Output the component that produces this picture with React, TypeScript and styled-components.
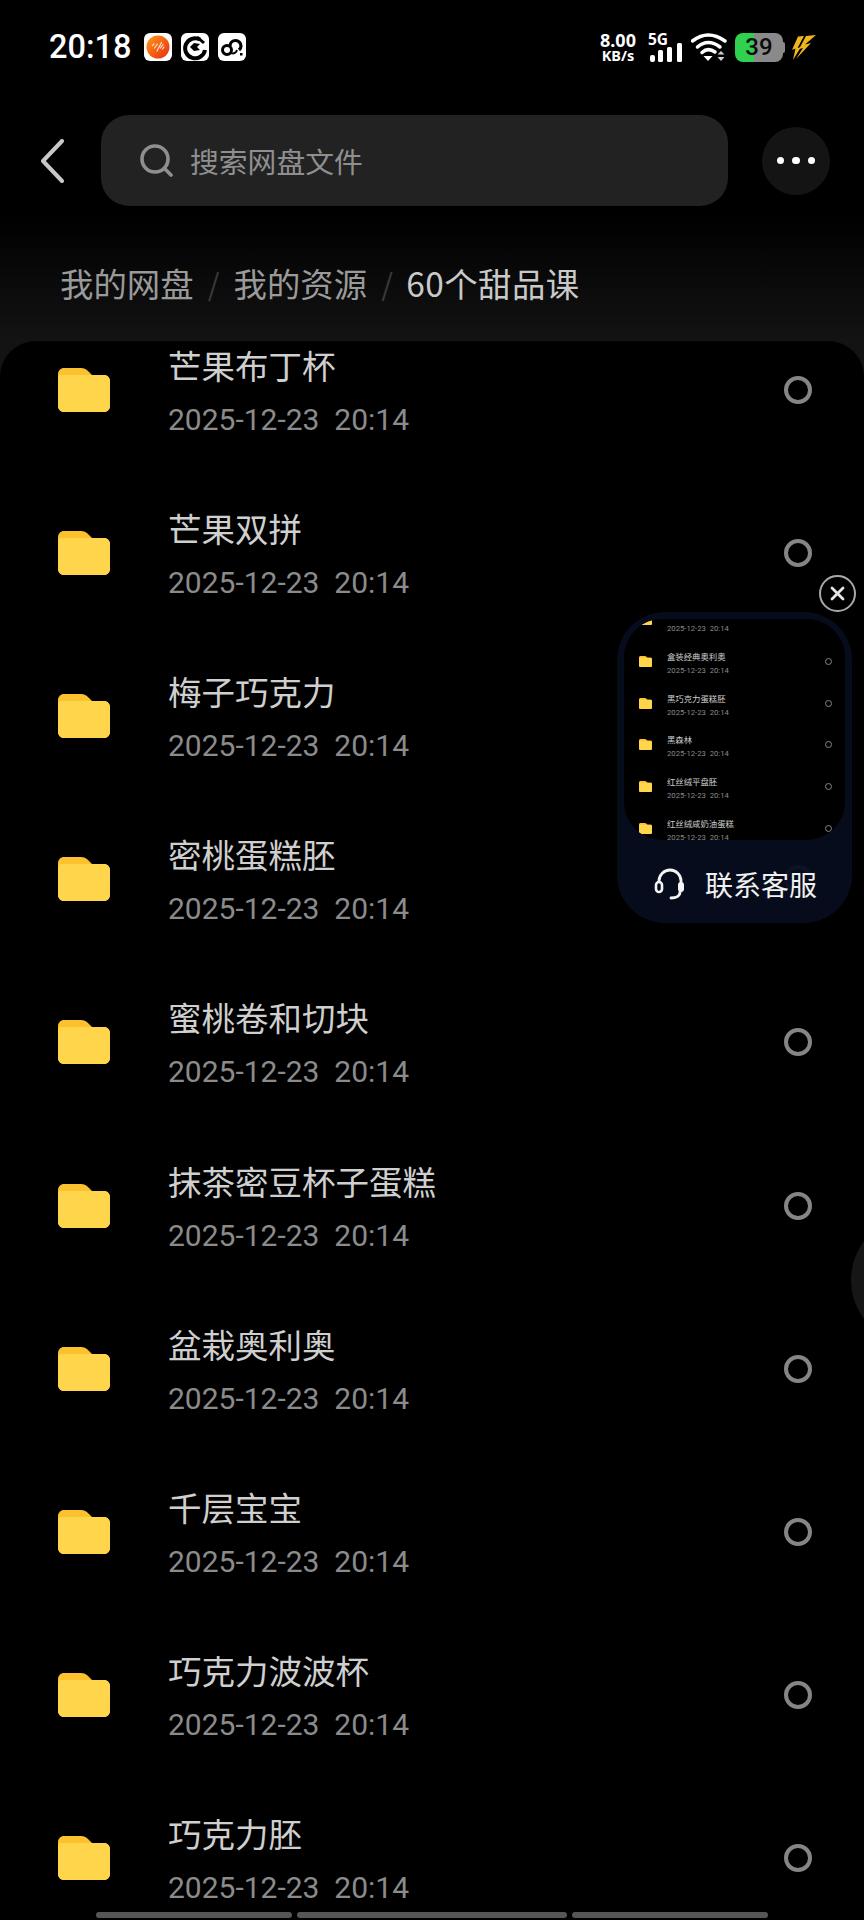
import React from "react";
import styled, { createGlobalStyle } from "styled-components";

const Global = createGlobalStyle`
  html, body { margin: 0; padding: 0; background: #000; }
  * { box-sizing: border-box; }
  body { font-family: Roboto, "Noto Sans CJK SC", sans-serif; }
`;

const Screen = styled.div`
  position: relative;
  width: 864px;
  height: 1920px;
  background: #000;
  overflow: hidden;
  display: flex;
  flex-direction: column;
`;
const Header = styled.header`
  flex: none;
  height: 341px;
  background: linear-gradient(#000 0, #000 215px, #131313 341px);
`;
const StatusBar = styled.div`
  height: 94px;
  padding: 0 48px 0 49px;
  display: flex;
  align-items: center;
`;
const Clock = styled.span`
  font: 500 32.5px/1 Roboto, sans-serif;
  color: #fff;
  margin-right: 12px;
  width: 83px;
  white-space: nowrap;
`;
const AppIcons = styled.div`
  display: flex;
  gap: 9px;
  flex: 1;
`;
const StatusGroup = styled.div`
  display: flex;
  align-items: center;
`;
const Speed = styled.div`
  display: flex;
  flex-direction: column;
  align-items: center;
  color: #fff;
  font-family: "Noto Sans", sans-serif;
  font-weight: 700;
  width: 38px;
  margin-right: 11px;
`;
const SpeedValue = styled.span`
  font-size: 18px;
  line-height: 16px;
`;
const SpeedUnit = styled.span`
  font-size: 14.5px;
  line-height: 14px;
`;
const Signal = styled.div`
  position: relative;
  width: 35px;
  height: 29px;
  margin-right: 8px;
`;
const NetLabel = styled.span`
  position: absolute;
  left: 0;
  top: 0;
  font: 700 15.5px/13px "Noto Sans", sans-serif;
  color: #fff;
`;
const Battery = styled.div<{ $level: number }>`
  width: 48px;
  height: 29px;
  margin-left: 8px;
  border-radius: 8px;
  background: linear-gradient(90deg, #2fd14f ${(p) => p.$level}%, #8a8a8a ${(p) => p.$level}%);
  color: #0c0c0c;
  font: 500 24px/29px Roboto, sans-serif;
  text-align: center;
`;
const BatteryNub = styled.div`
  width: 2px;
  height: 11px;
  margin-right: 7px;
  background: #8a8a8a;
  border-radius: 0 2px 2px 0;
`;
const TopBar = styled.div`
  margin-top: 21px;
  height: 91px;
  padding-left: 40px;
  display: flex;
  align-items: center;
`;
const BackButton = styled.div`
  width: 24px;
  height: 44px;
  margin-right: 37px;
  display: flex;
`;
const SearchBox = styled.div`
  width: 627px;
  height: 91px;
  margin-right: 34px;
  padding-left: 39px;
  border-radius: 28px;
  background: #222;
  display: flex;
  align-items: center;
  gap: 17px;
  color: #8f8f8f;
  font: 400 28.8px/40px "Noto Sans CJK SC", sans-serif;
`;
const MoreButton = styled.div`
  width: 68px;
  height: 68px;
  border-radius: 50%;
  background: #141414;
  display: flex;
  align-items: center;
  justify-content: center;
  gap: 8px;
`;
const Dot = styled.span`
  width: 7.5px;
  height: 7.5px;
  border-radius: 50%;
  background: #fff;
`;
const Crumbs = styled.nav`
  padding: 57px 0 38px 60px;
  display: flex;
  font: 400 33.4px/40px "Noto Sans CJK SC", sans-serif;
  color: #9a9a9a;
`;
const CrumbSep = styled.span`
  color: #3a3a3a;
  font-size: 30px;
  width: 40px;
  text-align: center;
`;
const CrumbCurrent = styled.span`
  color: #c9c9c9;
  letter-spacing: 0.5px;
  margin-left: -1px;
`;

const Panel = styled.main`
  flex: 1;
  overflow: hidden;
  background: #000;
  border-radius: 36px 36px 0 0;
  margin-top: 0;
`;
const HeaderBackdrop = styled.div`
  background: #131313;
  flex: 1;
  display: flex;
  min-height: 0;
`;
const List = styled.div`
  margin-top: -33px;
  width: 864px;
`;
const Row = styled.div`
  height: 163.2px;
  padding: 0 52px 0 58px;
  display: flex;
  align-items: center;
`;
const RowText = styled.div`
  flex: 1;
  margin-left: 58px;
  padding-top: 4px;
`;
const Name = styled.div`
  font: 400 33.5px/40px "Noto Sans CJK SC", sans-serif;
  color: #cfcfcf;
`;
const DateText = styled.div`
  margin-top: 16px;
  font: 400 30px/38px Roboto, sans-serif;
  color: #8b8b8b;
  white-space: pre;
`;
const Ring = styled.span`
  width: 28px;
  height: 28px;
  border-radius: 50%;
  border: 4px solid #858585;
`;

const Widget = styled.aside`
  position: absolute;
  left: 617px;
  top: 612px;
  width: 235px;
  height: 311px;
  border-radius: 48px;
  background: rgba(6, 13, 30, 0.95);
  padding: 7px 7px 0;
`;
const MiniScreen = styled.div`
  height: 221px;
  border-radius: 38px;
  overflow: hidden;
  background: #000;
`;
const MiniList = styled.div`
  margin-top: -20px;
`;
const MiniRow = styled.div`
  height: 41.7px;
  padding: 0 13px 0 15px;
  display: flex;
  align-items: center;
`;
const MiniText = styled.div`
  flex: 1;
  margin-left: 15px;
  padding-top: 4px;
`;
const MiniName = styled.div`
  font: 400 8.4px/11px "Noto Sans CJK SC", sans-serif;
  color: #cfcfcf;
`;
const MiniDate = styled.div`
  font: 400 7.7px/10px Roboto, sans-serif;
  margin-top: 4px;
  color: #8b8b8b;
  white-space: pre;
`;
const MiniRing = styled.span`
  width: 7px;
  height: 7px;
  border-radius: 50%;
  border: 1px solid #858585;
`;
const ServiceButton = styled.div`
  height: 83px;
  padding: 5px 0 0 30px;
  display: flex;
  align-items: center;
  gap: 19px;
  color: #f0f0f0;
  font: 400 28px/36px "Noto Sans CJK SC", sans-serif;
`;
const CloseButton = styled.div`
  position: absolute;
  left: 819px;
  top: 575px;
  width: 37px;
  height: 37px;
  border-radius: 50%;
  border: 2px solid #a8a8a8;
  background: #000;
  display: flex;
  align-items: center;
  justify-content: center;
`;
const EdgeHandle = styled.div`
  position: absolute;
  left: 851px;
  top: 1215px;
  width: 130px;
  height: 130px;
  border-radius: 50%;
  background: #161616;
`;
const ScrollBars = styled.div`
  position: absolute;
  left: 96px;
  bottom: 2px;
  width: 672px;
  height: 6px;
  display: flex;
  gap: 5px;
`;
const ScrollSegment = styled.span<{ $w: number }>`
  width: ${(p) => p.$w}px;
  border-radius: 3px;
  background: #565656;
`;

const Folder = ({ w = 52 }: { w?: number }) => (
  <svg width={w} height={(w * 44) / 52} viewBox="0 0 52 44" style={{ flex: "none" }}>
    <path d="M6 0h17c3 0 5 1 7 3l4 4h12c3.300 0 6 2.700 6 6v25c0 3.300-2.700 6-6 6H6c-3.300 0-6-2.700-6-6V6c0-3.300 2.700-6 6-6z" fill="#fcc12f" />
    <path d="M0 10c0-1.500 1-3 3-3h43c3.300 0 6 2.700 6 6v25c0 3.300-2.700 6-6 6H6c-3.300 0-6-2.700-6-6z" fill="#ffd64b" />
  </svg>
);

const items = ["芒果布丁杯", "芒果双拼", "梅子巧克力", "密桃蛋糕胚", "蜜桃卷和切块", "抹茶密豆杯子蛋糕", "盆栽奥利奥", "千层宝宝", "巧克力波波杯", "巧克力胚"];
const miniItems = ["", "盒装经典奥利奥", "黑巧克力蛋糕胚", "黑森林", "红丝绒平盘胚", "红丝绒咸奶油蛋糕"];
const DATE = "2025-12-23  20:14";

export default function App() {
  return (
    <Screen>
      <Global />
      <Header>
        <StatusBar>
          <Clock>20:18</Clock>
          <AppIcons>
            <svg width="28" height="28" viewBox="0 0 28 28">
              <rect width="28" height="28" rx="6" fill="#fff" />
              <defs>
                <linearGradient id="og" x1="0" y1="0" x2="1" y2="1">
                  <stop offset="0" stopColor="#ff9a1a" />
                  <stop offset="1" stopColor="#ea2a10" />
                </linearGradient>
              </defs>
              <circle cx="14" cy="14" r="11.500" fill="url(#og)" />
              <path d="M8.500 12.500l1.500-1.500M10.500 15l3-4M13 18l4.500-8.500M16.500 15l2.500-3.500M18.500 16l1.500-2" stroke="#ffe3cf" strokeWidth="1.200" strokeLinecap="round" fill="none" />
            </svg>
            <svg width="28" height="28" viewBox="0 0 28 28">
              <rect width="28" height="28" rx="6" fill="#fff" />
              <path d="M19 6.500A10 10 0 1 0 24 17" fill="none" stroke="#000" strokeWidth="4" />
              <path d="M17 3l7 6-2 2-7-6z" fill="#000" />
              <path d="M19 11l-6-1-4 4 4 4 6-1-3-3z" fill="#000" />
            </svg>
            <svg width="28" height="28" viewBox="0 0 28 28">
              <rect width="28" height="28" rx="6" fill="#fff" />
              <circle cx="9" cy="17" r="4.500" fill="none" stroke="#000" strokeWidth="3" />
              <path d="M12 13a5.500 5.500 0 0 1 11 0c0 2-1 3-2 4" fill="none" stroke="#000" strokeWidth="3.200" />
              <path d="M13 20c3 1 5 0 6-3" fill="none" stroke="#000" strokeWidth="2" />
              <rect x="22" y="20" width="2.500" height="2.500" fill="#000" />
            </svg>
          </AppIcons>
          <StatusGroup>
            <Speed>
              <SpeedValue>8.00</SpeedValue>
              <SpeedUnit>KB/s</SpeedUnit>
            </Speed>
            <Signal>
              <NetLabel>5G</NetLabel>
              <svg width="35" height="29" viewBox="0 0 35 29">
                <rect x="2" y="22" width="5" height="7" rx="2" fill="#fff" />
                <rect x="10" y="17" width="5" height="12" rx="1.500" fill="#fff" />
                <rect x="19" y="14" width="5" height="15" rx="1.500" fill="#fff" />
                <rect x="29" y="10" width="5" height="19" rx="1.500" fill="#fff" />
              </svg>
            </Signal>
            <svg width="36" height="30" viewBox="0 0 36 30">
              <path d="M1.500 9Q17 -3 34 9" fill="none" stroke="#fff" strokeWidth="3.500" strokeLinecap="round" />
              <path d="M6.500 15Q17 6 29 15" fill="none" stroke="#fff" strokeWidth="3.500" strokeLinecap="round" />
              <path d="M11 20.500Q17 15 24 20" fill="none" stroke="#fff" strokeWidth="3.500" strokeLinecap="round" />
              <path d="M12.500 24h9L17 29z" fill="#fff" />
              <path d="M26.500 22.500L30 19l3.500 3.500zM26.500 25L30 29l3.500-4z" fill="#d0d0d0" />
            </svg>
            <Battery $level={39}>39</Battery>
            <BatteryNub />
            <svg width="24" height="25" viewBox="0 0 24 25">
              <path d="M6 1.500L12 1 5.500 13 9 12 1 25l2.500-11.500L0 15z" fill="#f0b71d" />
              <path d="M14 1l10-1-11 9.500 6-1.500L4 24l7-11-4 1z" fill="#f0b71d" />
            </svg>
          </StatusGroup>
        </StatusBar>
        <TopBar>
          <BackButton>
            <svg width="24" height="44" viewBox="0 0 24 44">
              <path d="M22 2L3 22l19 20" fill="none" stroke="#c8c8c8" strokeWidth="4" strokeLinecap="round" strokeLinejoin="round" />
            </svg>
          </BackButton>
          <SearchBox>
            <svg width="33" height="33" viewBox="0 0 33 33" style={{ flex: "none" }}>
              <circle cx="15" cy="15" r="13" fill="none" stroke="#8f8f8f" strokeWidth="3.600" />
              <path d="M24.500 24.500L31 31" stroke="#8f8f8f" strokeWidth="3.600" strokeLinecap="round" />
            </svg>
            搜索网盘文件
          </SearchBox>
          <MoreButton>
            <Dot />
            <Dot />
            <Dot />
          </MoreButton>
        </TopBar>
        <Crumbs>
          <span>我的网盘</span>
          <CrumbSep>/</CrumbSep>
          <span>我的资源</span>
          <CrumbSep>/</CrumbSep>
          <CrumbCurrent>60个甜品课</CrumbCurrent>
        </Crumbs>
      </Header>
      <HeaderBackdrop>
        <Panel>
          <List>
            {items.map((n) => (
              <Row key={n}>
                <Folder />
                <RowText>
                  <Name>{n}</Name>
                  <DateText>{DATE}</DateText>
                </RowText>
                <Ring />
              </Row>
            ))}
          </List>
        </Panel>
      </HeaderBackdrop>

      <Widget>
        <MiniScreen>
          <MiniList>
            {miniItems.map((n, i) => (
              <MiniRow key={i}>
                <Folder w={13} />
                <MiniText>
                  <MiniName>{n || "\u00a0"}</MiniName>
                  <MiniDate>{DATE}</MiniDate>
                </MiniText>
                <MiniRing />
              </MiniRow>
            ))}
          </MiniList>
        </MiniScreen>
        <ServiceButton>
          <svg width="32" height="32" viewBox="0 0 32 32" style={{ flex: "none" }}>
            <path d="M5 15V13a11 11 0 0 1 22 0v2" fill="none" stroke="#f4f4f4" strokeWidth="2.800" />
            <rect x="2" y="14" width="6" height="10" rx="3" fill="none" stroke="#f4f4f4" strokeWidth="2.600" />
            <rect x="24" y="14" width="6" height="10" rx="3" fill="#f4f4f4" />
            <path d="M26 24c0 4-4 6-9 6" fill="none" stroke="#f4f4f4" strokeWidth="2.800" strokeLinecap="round" />
          </svg>
          联系客服
        </ServiceButton>
      </Widget>
      <CloseButton>
        <svg width="17" height="17" viewBox="0 0 17 17">
          <path d="M3 3l11 11M14 3L3 14" stroke="#e6e6e6" strokeWidth="2.800" strokeLinecap="round" />
        </svg>
      </CloseButton>
      <EdgeHandle />
      <ScrollBars>
        <ScrollSegment $w={196} />
        <ScrollSegment $w={270} />
        <ScrollSegment $w={196} />
      </ScrollBars>
    </Screen>
  );
}
